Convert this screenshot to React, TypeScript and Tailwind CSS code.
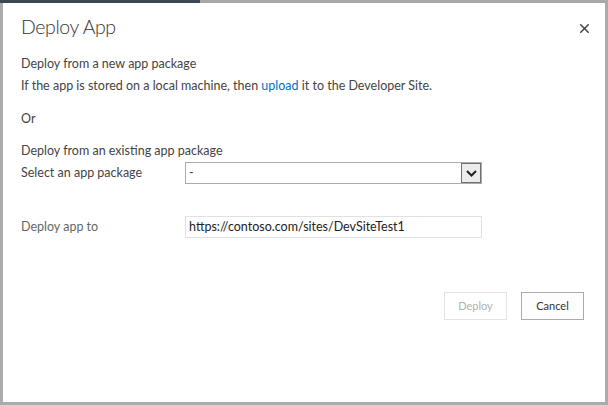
import { X } from "lucide-react";

const font = { fontFamily: 'Lato, "Open Sans", "Liberation Sans", sans-serif' };

export default function App() {
  return (
    <div className="w-[608px] h-[405px] flex flex-col bg-[#ababab] overflow-hidden" style={font}>
      <div className="h-[3px] flex shrink-0">
        <div className="w-[200px] bg-[#3b4856]" />
        <div className="flex-1 bg-[#a8a8a8]" />
      </div>
      <div className="flex-1 mx-[3px] mb-[3px] bg-white flex flex-col px-[18px] text-[#444] text-[12.5px]">
        <div className="flex items-start justify-between pt-[10px]">
          <h1 className="text-[19.5px] font-light tracking-[-0.4px] text-[#333] leading-[28px]">Deploy App</h1>
          <button className="mt-[8px] -mr-[5px] text-[#444]">
            <X size={15} strokeWidth={2.4} />
          </button>
        </div>
        <p className="mt-[12px] leading-[22px]">Deploy from a new app package</p>
        <p className="leading-[22px]">
          If the app is stored on a local machine, then{" "}
          <a className="text-[#0072c6]">upload</a> it to the Developer Site.
        </p>
        <p className="mt-[11px] leading-[22px]">Or</p>
        <p className="mt-[10px] leading-[22px]">Deploy from an existing app package</p>
        <div className="flex items-center">
          <span className="w-[164px]">Select an app package</span>
          <div className="w-[297px] h-[22px] border border-[#ababab] flex items-center justify-between">
            <span className="pl-[3px] text-[#444]">-</span>
            <div className="w-[20px] h-[20px] bg-[#ececec] border border-[#707070] flex items-center justify-center">
              <svg width="11" height="7" viewBox="0 0 11 7">
                <path d="M1 1 L5.5 5.5 L10 1" fill="none" stroke="#222" strokeWidth="2" />
              </svg>
            </div>
          </div>
        </div>
        <div className="flex items-center mt-[32px]">
          <span className="w-[164px] text-[#666]">Deploy app to</span>
          <div className="w-[297px] h-[22px] border border-[#e1e1e1] flex items-center pl-[3px] text-[#222]">
            https://contoso.com/sites/DevSiteTest1
          </div>
        </div>
        <div className="flex justify-end gap-[14px] mt-[54px] mr-[3px]">
          <button className="w-[63px] h-[28px] border border-[#e3e3e3] text-[#b1b1b1] text-[11px]">Deploy</button>
          <button className="w-[63px] h-[28px] border border-[#ababab] bg-[#fdfdfd] text-[#333] text-[11px]">Cancel</button>
        </div>
      </div>
    </div>
  );
}
